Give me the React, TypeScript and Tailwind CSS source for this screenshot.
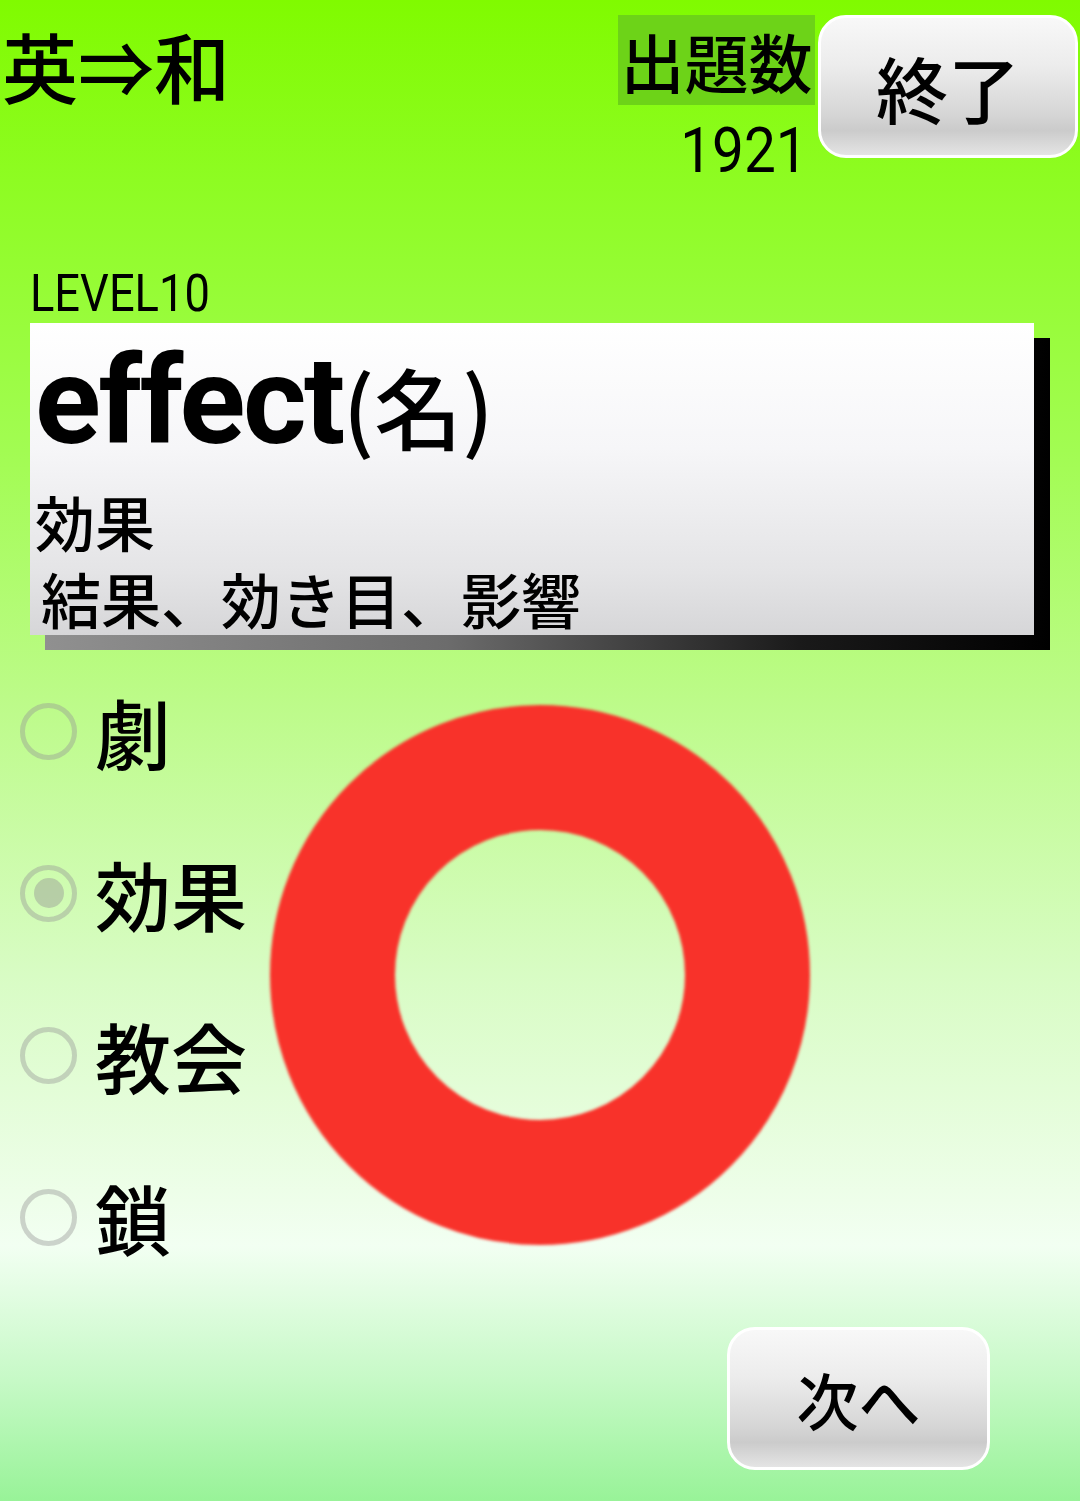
const jp = "font-['Noto_Sans_CJK_JP',sans-serif] font-medium";
const latin = "font-['Roboto','Noto_Sans_CJK_JP',sans-serif]";

const glossyButton =
  "flex items-center justify-center rounded-[28px] border-[3px] border-white bg-[linear-gradient(to_bottom,#f8f8f8_0%,#ececec_35%,#d6d6d6_70%,#cbcbcb_82%,#e4e4e4_100%)]";

const choices = [
  { label: "劇", selected: false },
  { label: "効果", selected: true },
  { label: "教会", selected: false },
  { label: "鎖", selected: false },
];

function Radio({ selected }: { selected: boolean }) {
  return (
    <div className="flex h-[57px] w-[57px] shrink-0 items-center justify-center rounded-full border-[5px] border-[rgba(150,150,150,0.42)]">
      {selected && <div className="h-[30px] w-[30px] rounded-full bg-[rgba(150,150,150,0.45)]" />}
    </div>
  );
}

export default function App() {
  return (
    <div className="relative h-[1501px] w-[1080px] overflow-hidden bg-[linear-gradient(to_bottom,#80fb00_0%,#8efc22_12%,#a2fc52_30%,#bdfb8a_47%,#d8fcc4_65%,#eefeea_80%,#f2fff2_83%,#c6f9c6_92%,#98f398_100%)] text-black">
      {/* header */}
      <div className="flex items-start pt-[15px]">
        <div className={`${jp} ml-[2px] mt-[12px] text-[76px] leading-none`}>英⇒和</div>
        <div className="flex-1" />
        <div className="flex flex-col items-end">
          <div className={`${jp} flex h-[90px] w-[197px] items-center justify-center whitespace-nowrap bg-[#6dd318] text-[64px] leading-none`}>
            出題数
          </div>
          <div className={`${latin} mt-[14px] mr-[7px] inline-block origin-right scale-x-[0.9] text-[63px] leading-none`}>
            1921
          </div>
        </div>
        <div className={`${glossyButton} ml-[3px] mr-[2px] h-[143px] w-[260px]`}>
          <span className={`${jp} text-[72px] leading-none`}>終了</span>
        </div>
      </div>

      {/* level */}
      <div className={`${latin} ml-[30px] mt-[86px] inline-block origin-left scale-x-[0.87] text-[52px] leading-none`}>
        LEVEL10
      </div>

      {/* word card */}
      <div className="relative ml-[30px] mt-[3px] h-[327px] w-[1020px]">
        <div className="absolute left-[15px] top-[15px] h-[312px] w-[1005px] bg-[linear-gradient(to_right,#909090_0%,#6c6c6c_40%,#1a1a1a_75%,#000_100%)]" />
        <div className="relative h-[312px] w-[1004px] bg-[linear-gradient(to_bottom,#ffffff_0%,#f6f6f8_40%,#e4e4e6_80%,#d6d6d8_100%)] pl-[5px] pt-[18px]">
          <div className="leading-none whitespace-nowrap">
            <span className={`${latin} text-[122px] font-bold tracking-[-0.02em]`}>effect</span>
            <span className={`${jp} text-[88px]`}>(名)</span>
          </div>
          <div className={`${jp} mt-[28px] text-[60px] leading-none`}>効果</div>
          <div className={`${jp} ml-[6px] mt-[17px] text-[60px] leading-none whitespace-nowrap`}>
            結果、効き目、影響
          </div>
        </div>
      </div>

      {/* choices */}
      <div className="flex flex-col">
        {choices.map((c) => (
          <div key={c.label} className="flex h-[162px] items-center pl-[20px]">
            <Radio selected={c.selected} />
            <span className={`${jp} ml-[18px] text-[76px] leading-none`}>{c.label}</span>
          </div>
        ))}
      </div>

      {/* next */}
      <div className={`${glossyButton} ml-[727px] mt-[29px] h-[143px] w-[263px]`}>
        <span className={`${jp} text-[62px] leading-none`}>次へ</span>
      </div>

      {/* correct mark overlay */}
      <div className="absolute left-[270px] top-[705px] h-[540px] w-[540px] rounded-full border-[125px] border-[#f8322a] blur-[1.5px]" />
    </div>
  );
}
